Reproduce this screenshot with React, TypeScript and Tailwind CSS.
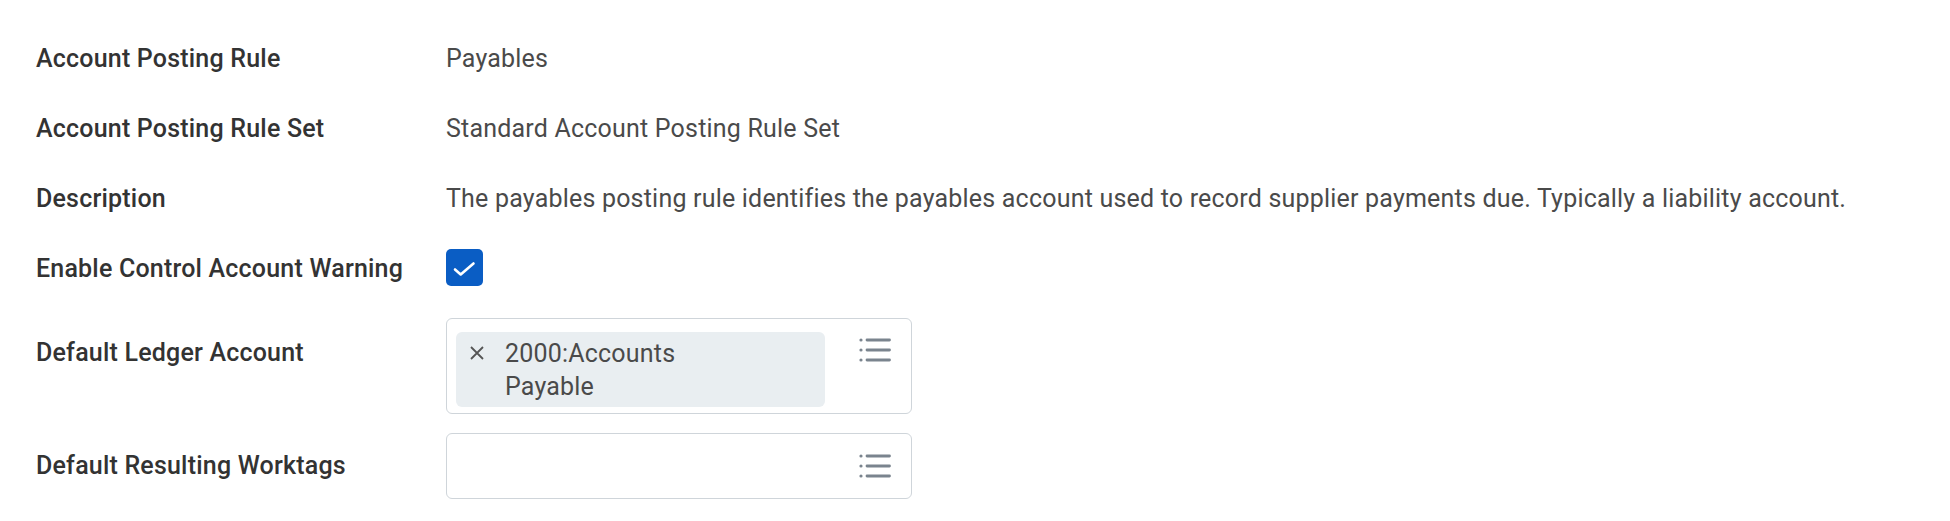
import React from "react";

function ListIcon() {
  return (
    <svg width="32" height="24" viewBox="0 0 32 24" fill="none">
      <circle cx="2" cy="2" r="1.6" fill="#7a848e" />
      <circle cx="2" cy="12" r="1.6" fill="#7a848e" />
      <circle cx="2" cy="22" r="1.6" fill="#7a848e" />
      <path d="M8 2H30.5M8 12H30.5M8 22H30.5" stroke="#7a848e" strokeWidth="2.8" strokeLinecap="round" />
    </svg>
  );
}

export default function App() {
  const label = "w-[410px] shrink-0 text-[25px] tracking-[0.2px] leading-[28px] font-medium text-[#333333]";
  const value = "text-[25px] tracking-[0.2px] leading-[28px] text-[#4a4a4a]";
  return (
    <div
      className="w-[1950px] h-[521px] bg-white pt-[45px] pl-[36px] flex flex-col"
      style={{ fontFamily: "Roboto, 'Noto Sans', sans-serif" }}
    >
      <div className="flex h-[28px]">
        <div className={label}>Account Posting Rule</div>
        <div className={value}>Payables</div>
      </div>
      <div className="flex h-[28px] mt-[42px]">
        <div className={label}>Account Posting Rule Set</div>
        <div className={value}>Standard Account Posting Rule Set</div>
      </div>
      <div className="flex h-[28px] mt-[42px]">
        <div className={label}>Description</div>
        <div className={value + " whitespace-nowrap"}>
          The payables posting rule identifies the payables account used to record supplier payments due. Typically a liability account.
        </div>
      </div>
      <div className="flex items-start h-[37px] mt-[36px]">
        <div className={label + " mt-[6px]"}>Enable Control Account Warning</div>
        <div className="w-[37px] h-[37px] rounded-[5px] bg-[#0a5dc4] flex items-center justify-center">
          <svg width="37" height="37" viewBox="0 0 37 37" fill="none">
            <path d="M9 20.5L14.7 25.5L27.5 14.5" stroke="white" strokeWidth="2.6" strokeLinecap="round" strokeLinejoin="round" />
          </svg>
        </div>
      </div>
      <div className="flex items-start mt-[32px]">
        <div className={label + " mt-[21px]"}>Default Ledger Account</div>
        <div className="w-[466px] h-[96px] border border-[#cfd5da] rounded-[6px] flex items-start pl-[9px] pr-[20px] pt-[13px] pb-[6px]">
          <div className="w-[369px] h-[75px] rounded-[6px] bg-[#e9eef1] flex items-start pl-[14px] pt-[5px]">
            <svg width="14" height="14" viewBox="0 0 14 14" className="mt-[9px] shrink-0" fill="none">
              <path d="M1 1L13 13M13 1L1 13" stroke="#555" strokeWidth="1.8" />
            </svg>
            <div className="ml-[21px] w-[200px] text-[25px] tracking-[0.2px] leading-[33px] text-[#4a4a4a]">
              2000:Accounts Payable
            </div>
          </div>
          <div className="ml-auto mt-[6px]">
            <ListIcon />
          </div>
        </div>
      </div>
      <div className="flex items-center mt-[19px]">
        <div className={label}>Default Resulting Worktags</div>
        <div className="w-[466px] h-[66px] border border-[#cfd5da] rounded-[6px] flex items-center justify-end pr-[20px]">
          <ListIcon />
        </div>
      </div>
    </div>
  );
}
